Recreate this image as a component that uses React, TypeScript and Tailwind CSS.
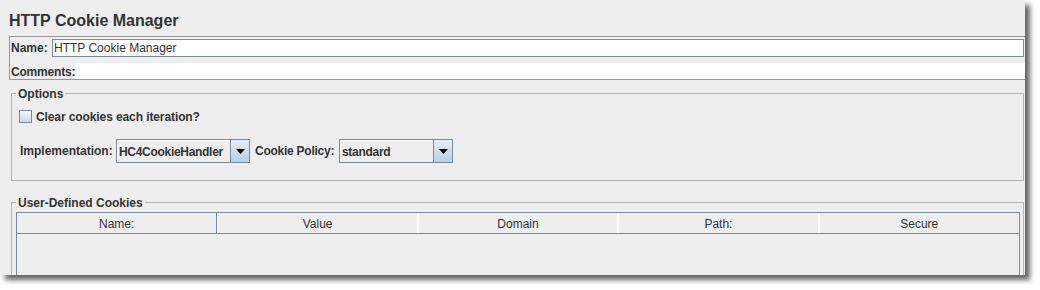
import type { ReactNode } from "react"

/**
 * JMeter-style "HTTP Cookie Manager" panel (Swing Metal look).
 */
const font = { fontFamily: '"Liberation Sans", Arial, sans-serif' }

const columns = ["Name:", "Value", "Domain", "Path:", "Secure"]

export default function App() {
  return (
    <div className="h-[290px] w-[1040px] bg-white" style={font}>
      <div className="h-[275px] w-[1025px] overflow-hidden bg-[#eeeeee] text-[#333333] shadow-[5px_5px_5px_rgba(0,0,0,0.6)]">
        <div className="pl-[9px] pt-[11px] text-[16px] font-bold leading-[20px]">HTTP Cookie Manager</div>

        {/* Name / Comments box */}
        <div className="ml-[9px] mt-[5px] border-b border-l border-t border-[#999999] pt-[2px]">
          <div className="flex h-[18px] items-center">
            <span className="w-[42px] pl-[1px] text-[12px] font-bold leading-[14px]">Name:</span>
            <div className="mr-[1px] flex h-[18px] flex-1 items-center border border-[#7a8a99] bg-white pl-[1px] text-[12px] leading-[14px]">
              HTTP Cookie Manager
            </div>
          </div>
          <div className="mt-[6px] flex h-[16px] items-center">
            <span className="w-[66px] pl-[1px] pt-[1px] text-[12px] font-bold leading-[14px] tracking-[-0.2px]">Comments:</span>
            <div className="h-[16px] flex-1 bg-white" />
          </div>
        </div>

        {/* Options */}
        <Group title="Options" className="mt-[5px]">
          <div className="pb-[17px] pl-[7px] pt-[9px]">
            <label className="flex h-[13px] items-center gap-[4px]">
              <span className="h-[13px] w-[13px] border border-[#7a8a99] bg-gradient-to-b from-[#f4f7fa] to-[#cbd8e6]" />
              <span className="pt-[1px] text-[12px] font-bold leading-[14px] tracking-[-0.1px]">Clear cookies each iteration?</span>
            </label>
            <div className="mt-[16px] flex h-[24px] items-center">
              <span className="w-[97px] pl-[1px] text-[12px] font-bold leading-[14px]">Implementation:</span>
              <Combo value="HC4CookieHandler" width="w-[134px]" />
              <span className="ml-[5px] w-[84px] text-[12px] font-bold leading-[14px] tracking-[-0.25px]">Cookie Policy:</span>
              <Combo value="standard" width="w-[114px]" />
            </div>
          </div>
        </Group>

        {/* User-Defined Cookies */}
        <Group title="User-Defined Cookies" className="mt-[13px] h-[200px]">
          <div className="pl-[4px] pr-[3px] pt-[2px]">
            <div className="h-[200px] border-l border-r border-t border-[#7a8a99]">
              <div className="grid h-[21px] grid-cols-5 border-b border-[#7a8a99]">
                {columns.map((c, i) => (
                  <div
                    key={c}
                    className={
                      "flex items-center justify-center pt-[1px] text-[12px] leading-[14px] " +
                      (i < columns.length - 1 ? "border-r border-[#7a8a99] " : "") +
                      (i > 0 ? "border-l border-white" : "")
                    }
                  >
                    {c}
                  </div>
                ))}
              </div>
            </div>
          </div>
        </Group>
      </div>
    </div>
  )
}

/** Titled border, like Swing's TitledBorder. */
function Group({ title, className, children }: { title: string; className?: string; children: ReactNode }) {
  return (
    <fieldset className={"ml-[11px] mr-[1px] border border-[#b4b4b4] " + (className ?? "")}>
      <legend className="ml-[4px] px-[2px] pt-[2px] text-[12px] font-bold leading-[14px]">{title}</legend>
      {children}
    </fieldset>
  )
}

/** Non-editable Metal combo box. */
function Combo({ value, width }: { value: string; width: string }) {
  return (
    <div className={"flex h-[24px] border border-[#7a8a99] " + width}>
      <div className="flex flex-1 items-center pl-[2px] pt-[1px] text-[12px] font-bold leading-[14px] tracking-[-0.3px] shadow-[inset_1px_1px_0_#ffffff]">
        {value}
      </div>
      <div className="flex w-[19px] items-center justify-center border-l border-[#7a8a99] bg-gradient-to-b from-[#e6eef6] to-[#b8cfe5]">
        <svg width="9" height="5" viewBox="0 0 9 5">
          <path d="M0 0h9L4.5 5z" fill="#000" />
        </svg>
      </div>
    </div>
  )
}
